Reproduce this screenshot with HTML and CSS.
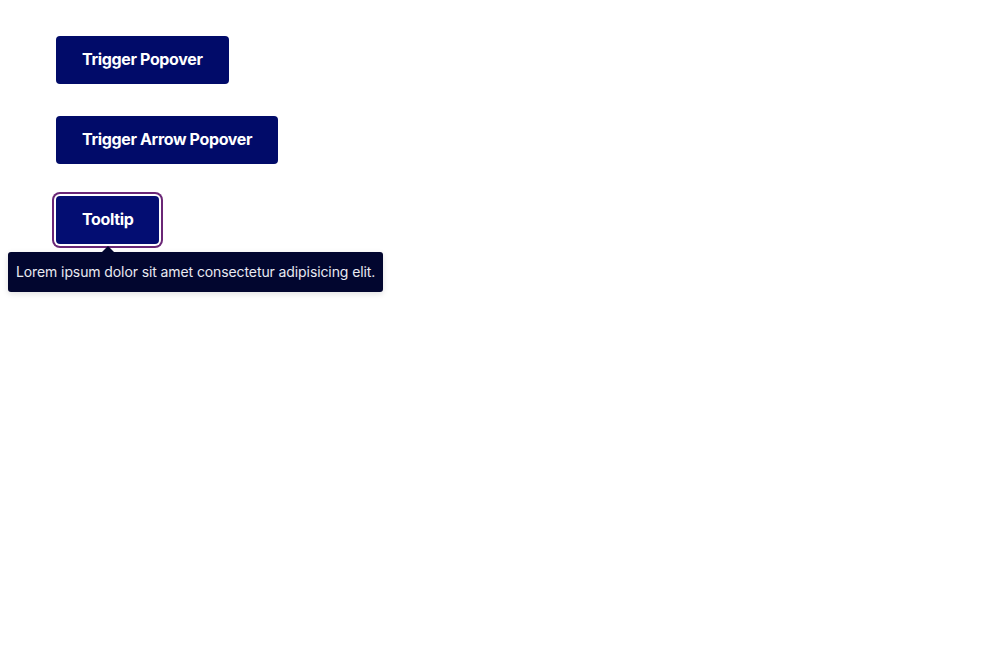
FILE: index.html
```html
<!DOCTYPE html>
<html lang="en">
<head>
<meta charset="utf-8">
<title>Popover demo</title>
<link rel="stylesheet" href="styles.css">
</head>
<body>
<main class="stack">
  <button class="btn" type="button">Trigger Popover</button>
  <button class="btn" type="button">Trigger Arrow Popover</button>
  <div class="tip-anchor">
    <button class="btn btn--focus" type="button">Tooltip</button>
    <div class="tooltip" role="tooltip">Lorem ipsum dolor sit amet consectetur adipisicing elit.</div>
  </div>
</main>
</body>
</html>
```
FILE: styles.css
```css
* { box-sizing: border-box; }
html, body { margin: 0; background: #ffffff; }
html, body { min-height: 660px; }
body {
  font-family: Inter, "Noto Sans", "Liberation Sans", sans-serif;
}
.stack {
  display: flex;
  flex-direction: column;
  align-items: flex-start;
  gap: 32px;
  padding: 36px 56px;
}
.btn {
  height: 48px;
  padding: 0 26px 2px;
  border: 0;
  border-radius: 4px;
  background: #010b69;
  color: #ffffff;
  font-family: inherit;
  font-size: 16px;
  font-weight: 700;
  letter-spacing: -0.35px;
  cursor: pointer;
}
.btn--focus {
  background: #030d72;
  box-shadow: 0 0 0 2px #ffffff, 0 0 0 4px #6a2676;
}
.tip-anchor { position: relative; }
.tooltip {
  position: absolute;
  top: 56px;
  left: -48px;
  white-space: nowrap;
  padding: 0 8px;
  height: 40px;
  line-height: 40px;
  background: #02062f;
  color: #e9eaf2;
  font-size: 14px;
  letter-spacing: -0.1px;
  border-radius: 3px;
  box-shadow: 0 2px 6px rgba(0,0,0,0.12);
}
.tooltip::before {
  content: "";
  position: absolute;
  top: -6px;
  left: 94px;
  border-left: 6px solid transparent;
  border-right: 6px solid transparent;
  border-bottom: 6px solid #02062f;
}
```
